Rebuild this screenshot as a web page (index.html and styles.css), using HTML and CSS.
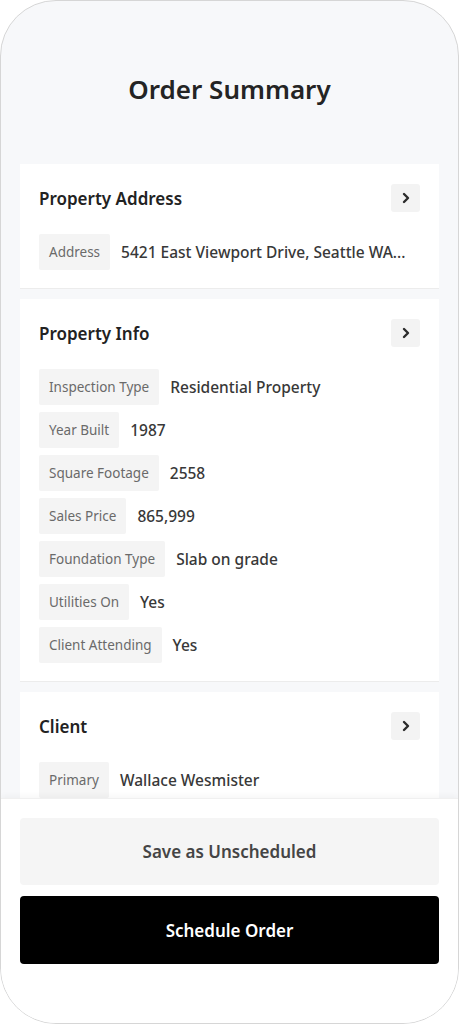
FILE: index.html
```
<!DOCTYPE html>
<html lang="en">
<head>
    <meta charset="UTF-8">
    <meta name="viewport" content="width=device-width, initial-scale=1.0">
    <title>Order Summary</title>
    <link rel="stylesheet" href="styles.css">
</head>
<body>

    <div class="phone">
        <div class="screen">
            <h1 class="page-title">Order Summary</h1>

            <div class="card">
                <div class="card-head">
                    <h2>Property Address</h2>
                    <button class="chevron-btn" aria-label="Edit">
                        <svg width="14" height="14" viewBox="0 0 14 14"><path d="M5 3 L9 7 L5 11" fill="none" stroke="#2b2b2b" stroke-width="2.4" stroke-linecap="round" stroke-linejoin="round"/></svg>
                    </button>
                </div>
                <div class="rows">
                    <div class="row"><span class="chip">Address</span><span class="value">5421 East Viewport Drive, Seattle WA...</span></div>
                </div>
            </div>

            <div class="card">
                <div class="card-head">
                    <h2>Property Info</h2>
                    <button class="chevron-btn" aria-label="Edit">
                        <svg width="14" height="14" viewBox="0 0 14 14"><path d="M5 3 L9 7 L5 11" fill="none" stroke="#2b2b2b" stroke-width="2.4" stroke-linecap="round" stroke-linejoin="round"/></svg>
                    </button>
                </div>
                <div class="rows">
                    <div class="row"><span class="chip">Inspection Type</span><span class="value">Residential Property</span></div>
                    <div class="row"><span class="chip">Year Built</span><span class="value">1987</span></div>
                    <div class="row"><span class="chip">Square Footage</span><span class="value">2558</span></div>
                    <div class="row"><span class="chip">Sales Price</span><span class="value">865,999</span></div>
                    <div class="row"><span class="chip">Foundation Type</span><span class="value">Slab on grade</span></div>
                    <div class="row"><span class="chip">Utilities On</span><span class="value">Yes</span></div>
                    <div class="row"><span class="chip">Client Attending</span><span class="value">Yes</span></div>
                </div>
            </div>

            <div class="card">
                <div class="card-head">
                    <h2>Client</h2>
                    <button class="chevron-btn" aria-label="Edit">
                        <svg width="14" height="14" viewBox="0 0 14 14"><path d="M5 3 L9 7 L5 11" fill="none" stroke="#2b2b2b" stroke-width="2.4" stroke-linecap="round" stroke-linejoin="round"/></svg>
                    </button>
                </div>
                <div class="rows">
                    <div class="row"><span class="chip">Primary</span><span class="value">Wallace Wesmister</span></div>
                </div>
            </div>
        </div>

        <div class="footer">
            <button class="btn btn-light">Save as Unscheduled</button>
            <button class="btn btn-dark">Schedule Order</button>
        </div>
    </div>

</body>
</html>
```

FILE: styles.css
```
body {
    margin: 0;
    background: #ffffff;
    font-family: 'Noto Sans', 'Open Sans', sans-serif;
}

.phone {
    width: 459px;
    height: 1024px;
    box-sizing: border-box;
    border: 1px solid #d6d6d6;
    border-radius: 56px;
    background: #f7f8fa;
    overflow: hidden;
    display: flex;
    flex-direction: column;
}

.screen {
    flex: 1;
    overflow: hidden;
    padding: 0 19px;
}

.page-title {
    margin: 70px 0 57px;
    text-align: center;
    font-size: 26px;
    line-height: 36px;
    font-weight: 600;
    color: #242424;
}

.card {
    background: #ffffff;
    padding: 20px 19px 18px;
    border-bottom: 1px solid #ececec;
    margin-bottom: 10px;
}

.card-head {
    display: flex;
    justify-content: space-between;
    align-items: center;
    height: 28px;
    margin-bottom: 22px;
}

.card-head h2 {
    margin: 0;
    font-size: 17px;
    font-weight: 600;
    color: #222;
}

.chevron-btn {
    width: 29px;
    height: 28px;
    border: none;
    border-radius: 3px;
    background: #f3f3f3;
    display: flex;
    align-items: center;
    justify-content: center;
    padding: 0;
}

.rows {
    display: flex;
    flex-direction: column;
    gap: 7px;
}

.row {
    display: flex;
    align-items: center;
    gap: 11px;
}

.chip {
    height: 36px;
    line-height: 37px;
    padding: 0 10px;
    background: #f4f4f4;
    color: #6a6a6a;
    font-size: 13.5px;
    border-radius: 2px;
}

.value {
    font-size: 15.5px;
    font-weight: 500;
    color: #383838;
    white-space: nowrap;
}

.footer {
    background: #ffffff;
    padding: 19px 19px 59px;
    display: flex;
    flex-direction: column;
    gap: 11px;
    box-shadow: 0 -2px 6px rgba(0, 0, 0, 0.04);
    border-top: 1px solid #f0f0f0;
}

.btn {
    height: 67px;
    border: none;
    border-radius: 4px;
    font-family: 'Noto Sans', 'Open Sans', sans-serif;
    font-size: 17px;
    font-weight: 600;
}

.btn-light {
    background: #f5f5f5;
    color: #454545;
}

.btn-dark {
    background: #000000;
    color: #ffffff;
    height: 68px;
}
```
